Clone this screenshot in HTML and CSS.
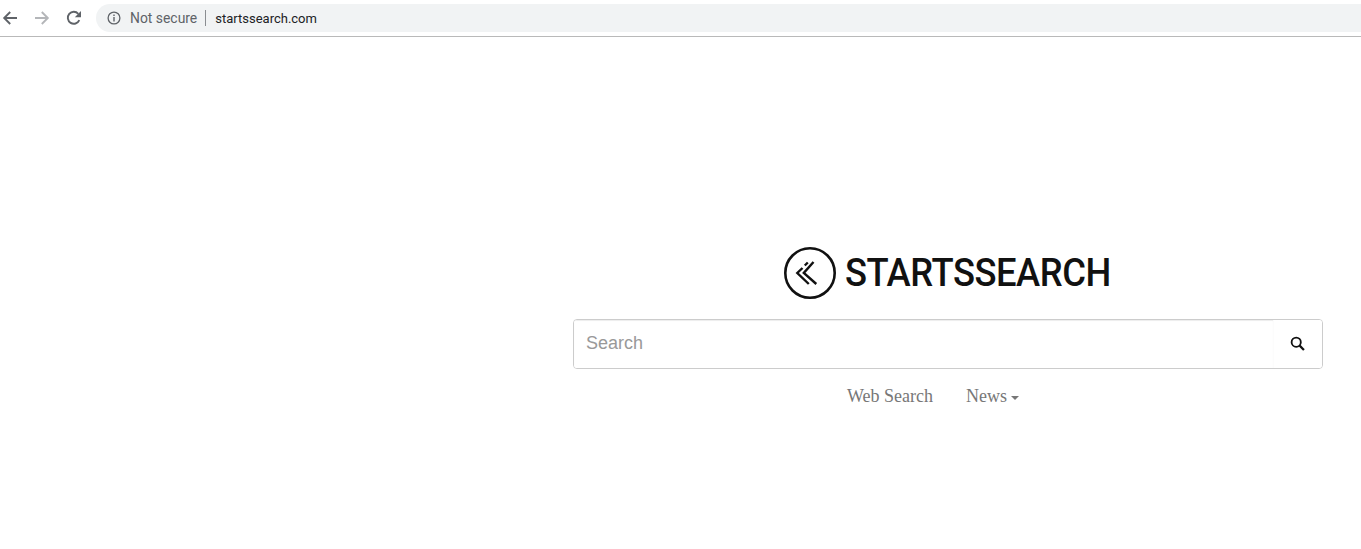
FILE: index.html
```html
<!DOCTYPE html>
<html lang="en">
<head>
<meta charset="utf-8">
<title>startssearch.com</title>
<link rel="stylesheet" href="styles.css">
</head>
<body>
<header class="toolbar">
  <svg class="nav-icon nav-back" viewBox="0 0 16 16"><path d="M15 8H2.500M8.200 2 2.200 8l6 6" fill="none" stroke="#5f6368" stroke-width="1.900"/></svg>
  <svg class="nav-icon nav-forward" viewBox="0 0 16 16"><path d="M1 8h12.500M7.800 2l6 6-6 6" fill="none" stroke="#b4b6b9" stroke-width="1.900"/></svg>
  <svg class="nav-icon nav-reload" viewBox="0 0 16 16"><path d="M13.300 10.200A6 6 0 1 1 12.300 3.800" fill="none" stroke="#5f6368" stroke-width="1.900"/><path d="M15 1v6.200H8.800z" fill="#5f6368"/></svg>
  <div class="omnibox">
    <svg class="info-icon" viewBox="0 0 14 14"><circle cx="7" cy="7" r="5.900" fill="none" stroke="#5f6368" stroke-width="1.300"/><path d="M6.300 3.500h1.400v1.400H6.300zM6.300 6h1.400v4.500H6.300z" fill="#5f6368"/></svg>
    <span class="not-secure">Not secure</span>
    <span class="divider"></span>
    <span class="url">startssearch.com</span>
  </div>
</header>
<main class="content">
  <div class="logo">
    <svg class="logo-mark" viewBox="0 0 52 52"><circle cx="26" cy="26" r="24.700" fill="none" stroke="#111" stroke-width="2.600"/><path d="M18.500 21 13.300 26l11.500 11M20.800 18.500l3-3M29.500 15 19.800 26l12.500 11" fill="none" stroke="#111" stroke-width="2.400"/></svg>
    <span class="logo-text">STARTSSEARCH</span>
  </div>
  <form class="search">
    <input class="search-input" type="text" placeholder="Search">
    <button class="search-button" type="button" aria-label="Search">
      <svg viewBox="0 0 14 14"><circle cx="5.800" cy="5.800" r="4.300" fill="none" stroke="#111" stroke-width="1.700"/><path d="m9 9 4 4" stroke="#111" stroke-width="2.100"/></svg>
    </button>
  </form>
  <nav class="tabs">
    <a class="tab">Web Search</a>
    <a class="tab">News<span class="caret"></span></a>
  </nav>
</main>
</body>
</html>
```
FILE: styles.css
```css
html, body {
  margin: 0;
  padding: 0;
  background: #fff;
}
body {
  height: 549px;
  overflow: hidden;
}
.toolbar {
  height: 36px;
  border-bottom: 1px solid #b9b9b9;
  display: flex;
  align-items: center;
  font-family: "Roboto", "Liberation Sans", sans-serif;
}
.nav-icon {
  width: 16px;
  height: 16px;
  flex: none;
}
.nav-back { margin-left: 2px; }
.nav-forward { margin-left: 16px; }
.nav-reload { margin-left: 16px; }
.omnibox {
  flex: 1;
  height: 28px;
  margin-left: 14px;
  background: #f1f3f4;
  border-radius: 14px 0 0 14px;
  display: flex;
  align-items: center;
  padding-left: 11px;
}
.info-icon {
  width: 14px;
  height: 14px;
  flex: none;
}
.not-secure {
  margin-left: 9px;
  color: #5f6368;
  font-size: 13.9px;
}
.divider {
  width: 1px;
  height: 16px;
  margin: 0 9px 0 8px;
  background: #8a8d91;
}
.url {
  color: #202124;
  font-size: 13px;
}
.content {
  width: 750px;
  margin-left: 573px;
  display: flex;
  flex-direction: column;
}
.logo {
  margin-top: 210px;
  margin-left: 211px;
  height: 52px;
  display: flex;
  align-items: center;
  gap: 9px;
}
.logo-mark {
  width: 52px;
  height: 52px;
  flex: none;
}
.logo-text {
  font-family: "Roboto", "Liberation Sans", sans-serif;
  font-weight: 500;
  font-size: 39px;
  line-height: 52px;
  color: #111;
  letter-spacing: -0.5px;
  white-space: nowrap;
  transform: scaleX(.933);
  transform-origin: left center;
}
.search {
  margin: 20px 0 0;
  height: 50px;
  box-sizing: border-box;
  border: 1px solid #ccc;
  border-radius: 4px;
  display: flex;
  overflow: hidden;
}
.search-input {
  flex: 1;
  min-width: 0;
  border: 0;
  outline: 0;
  padding: 0 12px 2px;
  font-family: "Liberation Sans", Arial, sans-serif;
  font-size: 18px;
  background: #fff;
  box-shadow: inset 0 1px 1px rgba(0, 0, 0, .075);
}
.search-input::placeholder { color: #999; opacity: 1; }
.search-button {
  width: 49px;
  border: 0;
  border-left: 1px solid #fcfcfc;
  background: #fff;
  padding: 0 2px 2px 0;
  display: flex;
  align-items: center;
  justify-content: center;
}
.search-button svg {
  width: 15px;
  height: 15px;
}
.tabs {
  margin-top: 17px;
  margin-left: 274px;
  display: flex;
  gap: 33px;
  font-family: "Liberation Serif", "Times New Roman", serif;
  font-size: 18px;
  line-height: 20px;
  color: #777;
}
.caret {
  display: inline-block;
  width: 0;
  height: 0;
  margin-left: 4px;
  vertical-align: middle;
  border-top: 4px solid #777;
  border-left: 4px solid transparent;
  border-right: 4px solid transparent;
}
```
